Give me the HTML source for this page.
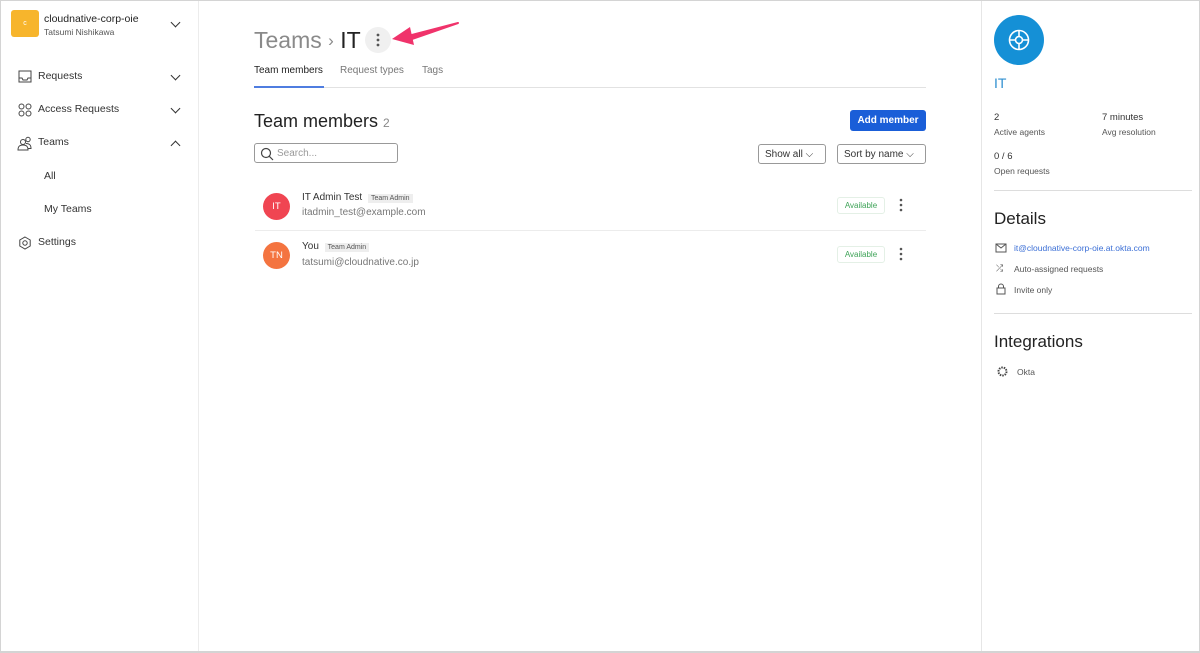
<!DOCTYPE html>
<html><head><style>
*{box-sizing:border-box;margin:0;padding:0}
body{width:1200px;height:653px;font-family:"Liberation Sans",sans-serif;color:#222;background:#fff;position:relative;overflow:hidden}
.frame{position:absolute;inset:0;border:1px solid #d4d4d4;border-bottom-width:2px}
.side{position:absolute;left:1px;top:1px;width:198px;height:650px;border-right:1px solid #ececec}
.abs{position:absolute}
.nav{position:absolute;left:37px;font-size:10.5px;color:#333}
.chev{position:absolute;left:171px;width:7px;height:7px;border-right:1.5px solid #333;border-bottom:1.5px solid #333}
.right{position:absolute;left:981px;top:1px;width:218px;height:650px;border-left:1px solid #e6e6e6}
.sm{font-size:8.5px;color:#555}
.btn{position:absolute;border:1px solid #999;border-radius:3px;font-size:10px;color:#333;padding-left:6px;line-height:19px;height:20px}
</style></head><body>
<div class="frame"></div>
<div class="side">
 <div class="abs" style="left:10px;top:9px;width:28px;height:27px;background:#f7b52c;border-radius:3px;color:#fff;font-size:7px;text-align:center;line-height:27px">c</div>
 <div class="abs" style="left:43px;top:12px;font-size:10.5px;color:#222">cloudnative-corp-oie</div>
 <div class="abs" style="left:43px;top:26px;font-size:8.5px;color:#555">Tatsumi Nishikawa</div>
 <div class="chev" style="top:18px;transform:rotate(45deg)"></div>
 <svg class="abs" style="left:17px;top:69px" width="14" height="13" viewBox="0 0 14 13" fill="none" stroke="#444" stroke-width="1"><rect x="1" y="1" width="12" height="11"/><path d="M1 8h3l1 2h4l1-2h3"/></svg>
 <div class="nav" style="top:69px">Requests</div><div class="chev" style="top:71px;transform:rotate(45deg)"></div>
 <svg class="abs" style="left:17px;top:102px" width="14" height="14" fill="none" stroke="#444"><circle cx="3.5" cy="3.5" r="2.5"/><circle cx="10.5" cy="3.5" r="2.5"/><circle cx="3.5" cy="10.5" r="2.5"/><circle cx="10.5" cy="10.5" r="2.5"/></svg>
 <div class="nav" style="top:102px">Access Requests</div><div class="chev" style="top:104px;transform:rotate(45deg)"></div>
 <svg class="abs" style="left:16px;top:135px" width="16" height="15" fill="none" stroke="#444"><circle cx="6" cy="6" r="2.5"/><circle cx="11" cy="3.5" r="2.2"/><path d="M1 14c0-4 2-5 5-5s5 1 5 5zM9 7.5c3 0 5 1 5 5h-3"/></svg>
 <div class="nav" style="top:135px">Teams</div><div class="chev" style="top:141px;transform:rotate(-135deg)"></div>
 <div class="nav" style="left:43px;top:169px">All</div>
 <div class="nav" style="left:43px;top:202px">My Teams</div>
 <svg class="abs" style="left:17px;top:235px" width="14" height="14" fill="none" stroke="#444"><path d="M7 1l5.2 3v6L7 13 1.8 10V4z"/><circle cx="7" cy="7" r="2.2"/></svg>
 <div class="nav" style="top:235px">Settings</div>
</div>

<div class="abs" style="left:254px;top:27px;font-size:23px;color:#8a8a8a">Teams <span style="font-size:17px;position:relative;top:-2px">›</span> <span style="color:#222">IT</span></div>
<div class="abs" style="left:365px;top:27px;width:26px;height:26px;border-radius:13px;background:#f0f0f0"></div>
<svg class="abs" style="left:375px;top:33px" width="6" height="14"><circle cx="3" cy="2" r="1.4" fill="#555"/><circle cx="3" cy="7" r="1.4" fill="#555"/><circle cx="3" cy="12" r="1.4" fill="#555"/></svg>
<svg class="abs" style="left:388px;top:18px" width="75" height="28"><path d="M70 5L20 18L21 22Z" fill="#f0336b" stroke="#f0336b" stroke-width="2" stroke-linejoin="round"/><path d="M4 21L22 9L26 27Z" fill="#f0336b"/></svg>
<div class="abs" style="left:254px;top:65px;font-size:10px;color:#222">Team members</div>
<div class="abs" style="left:340px;top:65px;font-size:10px;color:#777">Request types</div>
<div class="abs" style="left:422px;top:65px;font-size:10px;color:#777">Tags</div>
<div class="abs" style="left:254px;top:87px;width:672px;height:1px;background:#e2e2e2"></div>
<div class="abs" style="left:254px;top:86px;width:70px;height:2px;background:#4f7de0"></div>

<div class="abs" style="left:254px;top:111px;font-size:18px;color:#222">Team members <span style="font-size:12px;color:#888">2</span></div>
<div class="abs" style="left:850px;top:110px;width:76px;height:21px;background:#1a5ed8;border-radius:3px;color:#fff;font-size:10px;font-weight:bold;text-align:center;line-height:21px">Add member</div>
<div class="btn" style="left:254px;top:143px;width:144px;padding-left:22px;color:#999">Search...</div>
<svg class="abs" style="left:260px;top:147px" width="14" height="14" fill="none" stroke="#444" stroke-width="1.2"><circle cx="6" cy="6" r="4.5"/><path d="M9.3 9.3L13 13"/></svg>
<div class="btn" style="left:758px;top:144px;width:68px">Show all ⌵</div>
<div class="btn" style="left:837px;top:144px;width:89px">Sort by name ⌵</div>

<div class="abs" style="left:263px;top:193px;width:27px;height:27px;border-radius:50%;background:#f04552;color:#fff;font-size:9.5px;text-align:center;line-height:27px">IT</div>
<div class="abs" style="left:302px;top:192px;font-size:10px;color:#333">IT Admin Test <span style="font-size:7px;background:#eee;padding:1px 3px;color:#555;margin-left:3px">Team Admin</span></div>
<div class="abs" style="left:302px;top:207px;font-size:10px;color:#777">itadmin_test@example.com</div>
<div class="abs" style="left:255px;top:230px;width:671px;height:1px;background:#ececec"></div>
<div class="abs" style="left:263px;top:242px;width:27px;height:27px;border-radius:50%;background:#f47440;color:#fff;font-size:9.5px;text-align:center;line-height:27px">TN</div>
<div class="abs" style="left:302px;top:241px;font-size:10px;color:#333">You <span style="font-size:7px;background:#eee;padding:1px 3px;color:#555;margin-left:3px">Team Admin</span></div>
<div class="abs" style="left:302px;top:257px;font-size:10px;color:#777">tatsumi@cloudnative.co.jp</div>
<div class="abs" style="left:837px;top:197px;width:48px;height:17px;border:1px solid #e4f0e6;border-radius:3px;color:#3ea357;font-size:8px;text-align:center;line-height:15px">Available</div>
<div class="abs" style="left:837px;top:246px;width:48px;height:17px;border:1px solid #e4f0e6;border-radius:3px;color:#3ea357;font-size:8px;text-align:center;line-height:15px">Available</div>
<svg class="abs" style="left:898px;top:198px" width="6" height="14"><circle cx="3" cy="2" r="1.3" fill="#555"/><circle cx="3" cy="7" r="1.3" fill="#555"/><circle cx="3" cy="12" r="1.3" fill="#555"/></svg>
<svg class="abs" style="left:898px;top:247px" width="6" height="14"><circle cx="3" cy="2" r="1.3" fill="#555"/><circle cx="3" cy="7" r="1.3" fill="#555"/><circle cx="3" cy="12" r="1.3" fill="#555"/></svg>

<div class="right">
 <div class="abs" style="left:12px;top:14px;width:50px;height:50px;border-radius:50%;background:#1590d6"></div>
 <svg class="abs" style="left:25px;top:27px" width="24" height="24" fill="none" stroke="#fff" stroke-width="1.6"><circle cx="12" cy="12" r="9.5"/><circle cx="12" cy="12" r="3.5"/><path d="M12 2.5v6M12 15.5v6M2.5 12h6M15.5 12h6"/></svg>
 <div class="abs" style="left:12px;top:74px;font-size:14px;color:#2f8fd0">IT</div>
 <div class="abs" style="left:12px;top:111px;font-size:9.5px;color:#333">2</div>
 <div class="abs sm" style="left:12px;top:126px">Active agents</div>
 <div class="abs" style="left:120px;top:111px;font-size:9.5px;color:#333">7 minutes</div>
 <div class="abs sm" style="left:120px;top:126px">Avg resolution</div>
 <div class="abs" style="left:12px;top:150px;font-size:9.5px;color:#333">0 / 6</div>
 <div class="abs sm" style="left:12px;top:165px">Open requests</div>
 <div class="abs" style="left:12px;top:189px;width:198px;height:1px;background:#ddd"></div>
 <div class="abs" style="left:12px;top:208px;font-size:17px;color:#222">Details</div>
 <svg class="abs" style="left:13px;top:242px" width="12" height="10" fill="none" stroke="#555"><rect x="1" y="1" width="10" height="8"/><path d="M1 1l5 4 5-4"/></svg>
 <div class="abs" style="left:32px;top:242px;font-size:8.5px;color:#3b6fd6">it@cloudnative-corp-oie.at.okta.com</div>
 <div class="abs" style="left:14px;top:262px;font-size:9px;color:#555">⤮</div>
 <div class="abs sm" style="left:32px;top:263px">Auto-assigned requests</div>
 <svg class="abs" style="left:14px;top:282px" width="10" height="12" fill="none" stroke="#555"><rect x="1" y="5" width="8" height="6"/><path d="M2.5 5V3.5a2.5 2.5 0 0 1 5 0V5"/></svg>
 <div class="abs sm" style="left:32px;top:284px">Invite only</div>
 <div class="abs" style="left:12px;top:312px;width:198px;height:1px;background:#ddd"></div>
 <div class="abs" style="left:12px;top:331px;font-size:17px;color:#222">Integrations</div>
 <svg class="abs" style="left:15px;top:365px" width="11" height="11"><circle cx="5.5" cy="5.5" r="4" fill="none" stroke="#444" stroke-width="2" stroke-dasharray="1.5 1"/></svg>
 <div class="abs sm" style="left:35px;top:366px">Okta</div>
</div>
</body></html>
